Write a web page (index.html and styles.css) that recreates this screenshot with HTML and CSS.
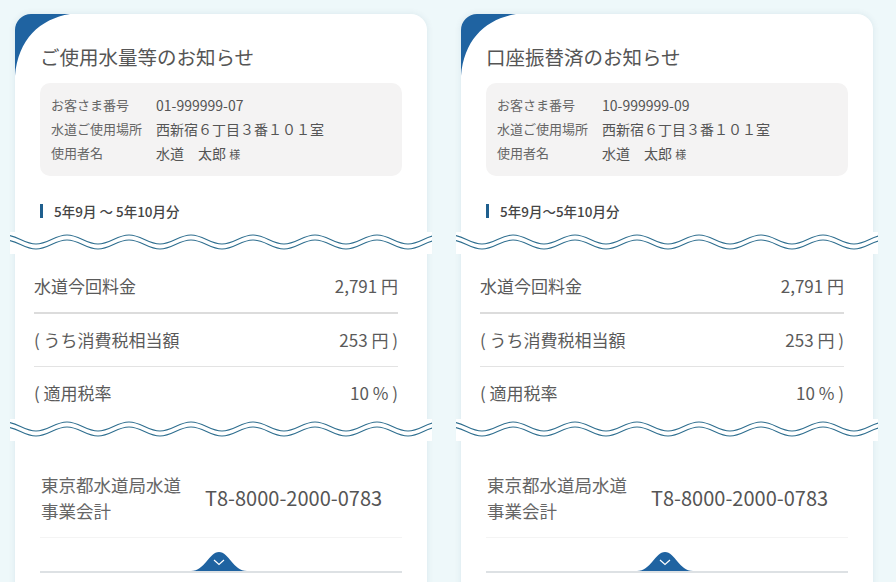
FILE: index.html
```html
<!DOCTYPE html>
<html lang="ja">
  <head>
    <meta charset="UTF-8" />
    <meta name="viewport" content="width=device-width, initial-scale=1.0" />
    <title>お知らせ</title>
    <link rel="stylesheet" href="styles.css">
  </head>
  <body>
    <div class="page">
      <section class="card">
        <svg class="corner" width="60" height="64" viewBox="0 0 60 64">
          <path d="M0 16 A16 16 0 0 1 16 0 L55 0 C25 5 3 25 0 62 Z" fill="#1f63a1" />
        </svg>
        <div class="head">
          <h1 class="title">ご使用水量等のお知らせ</h1>
          <dl class="info">
            <div class="info-row"><dt>お客さま番号</dt><dd>01-999999-07</dd></div>
            <div class="info-row"><dt>水道ご使用場所</dt><dd>西新宿６丁目３番１０１室</dd></div>
            <div class="info-row"><dt>使用者名</dt><dd>水道　太郎 <small>様</small></dd></div>
          </dl>
          <p class="period">5年9月 ～ 5年10月分</p>
        </div>
        <div class="wave">
          <svg width="422" height="22" viewBox="0 0 422 22">
            <path d="M-5 3 C7 3 14 12 26 12 S45 3 57 3 S76 12 88 12 S107 3 119 3 S138 12 150 12 S169 3 181 3 S200 12 212 12 S231 3 243 3 S262 12 274 12 S293 3 305 3 S324 12 336 12 S355 3 367 3 S386 12 398 12 S417 3 429 3" />
            <path d="M-5 8 C7 8 14 17 26 17 S45 8 57 8 S76 17 88 17 S107 8 119 8 S138 17 150 17 S169 8 181 8 S200 17 212 17 S231 8 243 8 S262 17 274 17 S293 8 305 8 S324 17 336 17 S355 8 367 8 S386 17 398 17 S417 8 429 8" />
          </svg>
        </div>
        <div class="charges">
          <div class="charge main"><span>水道今回料金</span><span>2,791 円</span></div>
          <div class="charge"><span>( うち消費税相当額</span><span>253 円 )</span></div>
          <div class="charge"><span>( 適用税率</span><span>10 % )</span></div>
        </div>
        <div class="wave">
          <svg width="422" height="22" viewBox="0 0 422 22">
            <path d="M-5 3 C7 3 14 12 26 12 S45 3 57 3 S76 12 88 12 S107 3 119 3 S138 12 150 12 S169 3 181 3 S200 12 212 12 S231 3 243 3 S262 12 274 12 S293 3 305 3 S324 12 336 12 S355 3 367 3 S386 12 398 12 S417 3 429 3" />
            <path d="M-5 8 C7 8 14 17 26 17 S45 8 57 8 S76 17 88 17 S107 8 119 8 S138 17 150 17 S169 8 181 8 S200 17 212 17 S231 8 243 8 S262 17 274 17 S293 8 305 8 S324 17 336 17 S355 8 367 8 S386 17 398 17 S417 8 429 8" />
          </svg>
        </div>
        <div class="issuer">
          <div class="issuer-name"><span>東京都水道局水道</span><span>事業会計</span></div>
          <div class="issuer-no">T8-8000-2000-0783</div>
        </div>
        <div class="more">
          <svg width="56" height="19" viewBox="0 0 56 19">
            <path d="M0 19 C14 19 18 0 28 0 C38 0 42 19 56 19 Z" fill="#1f63a1" />
            <path d="M23 8 L28 12.5 L33 8" fill="none" stroke="#fff" stroke-width="1.2" />
          </svg>
        </div>
      </section>

      <section class="card">
        <svg class="corner" width="60" height="64" viewBox="0 0 60 64">
          <path d="M0 16 A16 16 0 0 1 16 0 L55 0 C25 5 3 25 0 62 Z" fill="#1f63a1" />
        </svg>
        <div class="head">
          <h1 class="title">口座振替済のお知らせ</h1>
          <dl class="info">
            <div class="info-row"><dt>お客さま番号</dt><dd>10-999999-09</dd></div>
            <div class="info-row"><dt>水道ご使用場所</dt><dd>西新宿６丁目３番１０１室</dd></div>
            <div class="info-row"><dt>使用者名</dt><dd>水道　太郎 <small>様</small></dd></div>
          </dl>
          <p class="period">5年9月～5年10月分</p>
        </div>
        <div class="wave">
          <svg width="422" height="22" viewBox="0 0 422 22">
            <path d="M-5 3 C7 3 14 12 26 12 S45 3 57 3 S76 12 88 12 S107 3 119 3 S138 12 150 12 S169 3 181 3 S200 12 212 12 S231 3 243 3 S262 12 274 12 S293 3 305 3 S324 12 336 12 S355 3 367 3 S386 12 398 12 S417 3 429 3" />
            <path d="M-5 8 C7 8 14 17 26 17 S45 8 57 8 S76 17 88 17 S107 8 119 8 S138 17 150 17 S169 8 181 8 S200 17 212 17 S231 8 243 8 S262 17 274 17 S293 8 305 8 S324 17 336 17 S355 8 367 8 S386 17 398 17 S417 8 429 8" />
          </svg>
        </div>
        <div class="charges">
          <div class="charge main"><span>水道今回料金</span><span>2,791 円</span></div>
          <div class="charge"><span>( うち消費税相当額</span><span>253 円 )</span></div>
          <div class="charge"><span>( 適用税率</span><span>10 % )</span></div>
        </div>
        <div class="wave">
          <svg width="422" height="22" viewBox="0 0 422 22">
            <path d="M-5 3 C7 3 14 12 26 12 S45 3 57 3 S76 12 88 12 S107 3 119 3 S138 12 150 12 S169 3 181 3 S200 12 212 12 S231 3 243 3 S262 12 274 12 S293 3 305 3 S324 12 336 12 S355 3 367 3 S386 12 398 12 S417 3 429 3" />
            <path d="M-5 8 C7 8 14 17 26 17 S45 8 57 8 S76 17 88 17 S107 8 119 8 S138 17 150 17 S169 8 181 8 S200 17 212 17 S231 8 243 8 S262 17 274 17 S293 8 305 8 S324 17 336 17 S355 8 367 8 S386 17 398 17 S417 8 429 8" />
          </svg>
        </div>
        <div class="issuer">
          <div class="issuer-name"><span>東京都水道局水道</span><span>事業会計</span></div>
          <div class="issuer-no">T8-8000-2000-0783</div>
        </div>
        <div class="more">
          <svg width="56" height="19" viewBox="0 0 56 19">
            <path d="M0 19 C14 19 18 0 28 0 C38 0 42 19 56 19 Z" fill="#1f63a1" />
            <path d="M23 8 L28 12.5 L33 8" fill="none" stroke="#fff" stroke-width="1.2" />
          </svg>
        </div>
      </section>
    </div>
  </body>
</html>
```

FILE: styles.css
```css
body {
  margin: 0;
  background: #eef8fa;
  font-family: "Noto Sans CJK JP", "Noto Sans", sans-serif;
  color: #555;
  overflow: hidden;
}
.page {
  display: flex;
  gap: 34px;
  padding: 14px 0 0 15px;
}
.card {
  position: relative;
  width: 412px;
  height: 620px;
  background: #fff;
  border-radius: 16px 16px 0 0;
  box-shadow: 0 0 7px rgba(0, 70, 100, 0.09);
}
.corner {
  position: absolute;
  top: 0;
  left: 0;
}
.head {
  padding: 31px 25px 0;
}
.title {
  margin: 0;
  font-size: 19.5px;
  line-height: 24px;
  font-weight: 400;
  color: #555;
}
.info {
  margin: 14px 0 0;
  padding: 10px 11px;
  background: #f4f3f3;
  border-radius: 10px;
  font-size: 13px;
  line-height: 24px;
}
.info-row {
  display: flex;
}
.info dt {
  width: 105px;
  color: #666;
}
.info dd {
  margin: 0;
  font-size: 14px;
  color: #555;
}
.info small {
  font-size: 11px;
}
.period {
  margin: 28px 0 0;
  padding-left: 11px;
  border-left: 3px solid #1f5f8e;
  font-size: 13.5px;
  line-height: 14px;
  font-weight: 500;
  color: #444;
}
.wave {
  margin: 14px -5px 0;
  height: 22px;
  background: #fff;
}
.wave svg {
  display: block;
  fill: none;
  stroke: #2d6d8e;
  stroke-width: 1.1;
}
.charges {
  padding: 6px 29px 0 19px;
}
.charge {
  display: flex;
  justify-content: space-between;
  padding: 14px 0;
  font-size: 17px;
  line-height: 24px;
  color: #5a5a5a;
  border-bottom: 1px solid #e3e3e3;
}
.charge.main {
  border-bottom: 2px solid #dcdcdc;
}
.charge:last-child {
  border-bottom: none;
}
.charges + .wave {
  margin-top: 0;
}
.issuer {
  display: flex;
  align-items: center;
  margin: 0 25px;
  padding: 31px 0 14px 1px;
  border-bottom: 1px solid #f4f4f4;
}
.issuer-name {
  display: flex;
  flex-direction: column;
  width: 164px;
  font-size: 17.5px;
  line-height: 25.5px;
  color: #666;
}
.issuer-no {
  font-size: 20px;
  color: #555;
}
.more {
  display: flex;
  justify-content: center;
  margin: 14px 25px 0;
  border-bottom: 2px solid #dde1e4;
}
.more svg {
  display: block;
  margin-left: -4px;
}
```
